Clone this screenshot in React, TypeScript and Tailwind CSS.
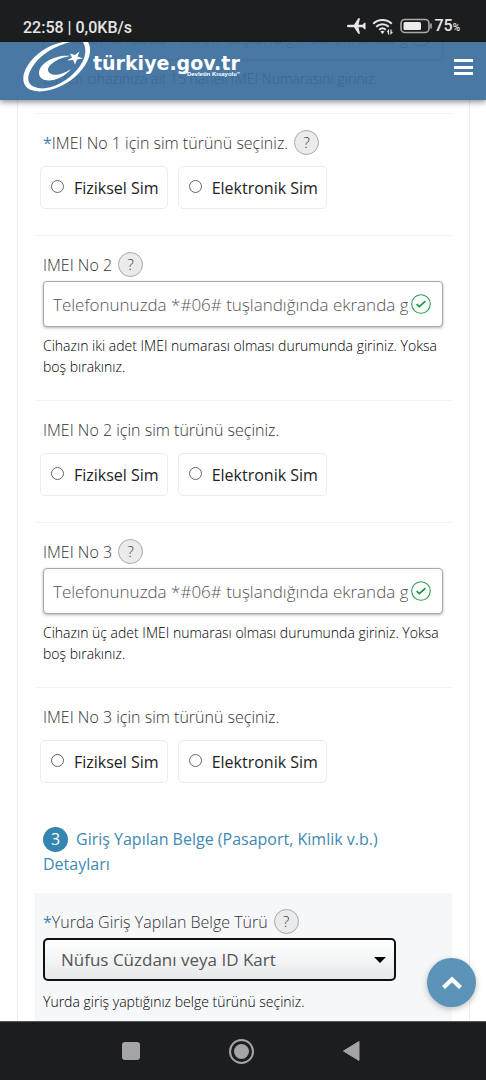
import type { ReactNode } from "react";

function HelpButton() {
  return (
    <button
      type="button"
      aria-label="Yardım"
      className="flex size-[25px] shrink-0 items-center justify-center rounded-full border border-[#a9a9a9] bg-[#ebebeb] text-[15px] font-light text-[#333]"
    >
      ?
    </button>
  );
}

function ValidIcon() {
  return (
    <svg viewBox="0 0 20 20" className="pointer-events-none absolute right-3 size-5" fill="none" aria-hidden="true">
      <circle cx="10" cy="10" r="9.3" stroke="#2f9e52" strokeWidth="1.1" />
      <path d="M5.6 10.2l2.8 2.5 6-5.6" stroke="#16993c" strokeWidth="1.7" />
    </svg>
  );
}

function Row({ children }: { children: ReactNode }) {
  return <div className="border-t border-[#f4f4f4] pt-4 pr-[9px] pl-2">{children}</div>;
}

type FieldProps = { id: string; label: string; hint: string };

function TextBox({ id, label }: { id: string; label?: string }) {
  return (
    <div className="relative flex items-center">
      <input
        id={id}
        type="text"
        aria-label={label}
        placeholder="Telefonunuzda *#06# tuşlandığında ekranda görünen numara"
        className="h-[46px] w-full rounded border border-[#aaa] bg-white pr-[34px] pl-[9px] text-[17px] font-light text-[#444] shadow-[0_1px_3px_rgba(0,0,0,0.3)] placeholder:text-[#555]"
      />
      <ValidIcon />
    </div>
  );
}

function ImeiField({ id, label, hint }: FieldProps) {
  return (
    <Row>
      <div className="mb-1 flex h-[25px] items-center gap-[6px]">
        <label htmlFor={id} className="text-[16px] font-light">
          {label}
        </label>
        <HelpButton />
      </div>
      <TextBox id={id} />
      <p className="mt-2 pb-[23px] text-[14px] leading-[21px] font-light text-black">{hint}</p>
    </Row>
  );
}

function SimOption({ name, label }: { name: string; label: string }) {
  return (
    <label className="flex h-[43px] items-center gap-[10px] rounded-[5px] border border-[#ececec] px-2 pl-[10px] text-[16px] text-[#222]">
      <input
        type="radio"
        name={name}
        className="-mt-[2px] size-[13px] appearance-none rounded-full border border-[#666] bg-white checked:border-4"
      />
      {label}
    </label>
  );
}

function SimChoice({ no, required }: { no: number; required?: boolean }) {
  const name = `sim-${no}`;
  return (
    <Row>
      <fieldset className="pb-[26px]">
        <legend className="mb-[11px] flex h-[25px] items-center gap-[6px] text-[16px] font-light">
          <span>
            {required && <span className="font-normal text-[#3783ae]">*</span>}
            IMEI No {no} için sim türünü seçiniz.
          </span>
          {required && <HelpButton />}
        </legend>
        <div className="-ml-[3px] flex gap-[10px]">
          <SimOption name={name} label="Fiziksel Sim" />
          <SimOption name={name} label="Elektronik Sim" />
        </div>
      </fieldset>
    </Row>
  );
}

function StatusBar() {
  return (
    <div className="flex h-[42px] items-end justify-between bg-[#1c1d1f] pr-[26px] pb-1 pl-[23px] font-[Roboto,sans-serif] text-[16px] leading-5 font-medium text-[#e6e6e6]">
      <span>22:58 | 0,0KB/s</span>
      <div className="flex items-center">
        <svg viewBox="0 0 19 18" className="mr-[6px] h-[18px] w-[19px]" fill="currentColor" aria-hidden="true">
          <path d="M0 9C0 8.200.8 7.800 1.800 7.800H7L11.300 1.200H13L11.500 7.800H15.500L17.300 5.800H18.500V12.200H17.300L15.500 10.200H11.500L13 16.800H11.300L7 10.200H1.800C.8 10.200 0 9.800 0 9Z" />
        </svg>
        <svg viewBox="0 0 22 18" className="mr-[6px] h-[18px] w-[22px]" fill="none" stroke="currentColor" strokeWidth="2" aria-hidden="true">
          <path d="M1.200 6.800a13.500 13.500 0 0 1 18.600 0M4.200 9.800a9.300 9.300 0 0 1 12.600 0M7.200 12.700a5 5 0 0 1 6.600 0" />
          <path d="M8.400 14.500a3.400 3.400 0 0 1 4.200 0L10.500 17z" fill="currentColor" stroke="none" />
          <path d="M16.500 17.500v-4l-1.300 1.600M19 12.500v4l1.400-1.600" strokeWidth="1.200" />
        </svg>
        <svg viewBox="0 0 32 16" className="mr-[2px] h-4 w-8" aria-hidden="true">
          <rect x="1" y="1.500" width="28" height="13" rx="4" fill="none" stroke="#aaa" strokeWidth="1.600" />
          <rect x="3.500" y="4" width="17.500" height="8" rx="1.500" fill="#ececec" />
          <path d="M31 5.500v5" stroke="#aaa" strokeWidth="1.600" />
        </svg>
        <span>75</span>
        <span className="pt-1 text-[10px]">%</span>
      </div>
    </div>
  );
}

function SiteHeader() {
  return (
    <header className="flex h-[58px] justify-between bg-[#3a6e9c]/93 pr-[13px] pl-[22px] shadow-[0_2px_6px_rgba(0,0,0,0.45)]">
      <a href="#" className="flex text-white">
        <svg viewBox="0 0 70 50" className="h-[50px] w-[70px]" fill="currentColor" aria-hidden="true">
          <path
            fillRule="evenodd"
            d="M66 0C71 9 67 22 54 34C42 45 25 51 13 49C0 47-2 35 6 23C13 12 26 3 41 0H48C33 4 19 12 11 24C4 34 4 44 16 46C27 48 41 42 52 31C63 20 66 9 61 0Z"
          />
          <path d="M49 14C34 12 17 21 17 31C17 42 38 41 49 27C39 34 27 35 26 28C26 22 38 15 49 14Z" />
          <path d="M57.500 9.500L55.500 14.500L61 16.500L55 17.500L53 22.500L51 18L45 18.500L50 15.500L48 11.500L53 13Z" />
        </svg>
        <span className="mt-[11px] ml-[1px] flex flex-col items-end font-['DejaVu_Sans',sans-serif] font-bold">
          <span className="text-[19px] leading-5">türkiye.gov.tr</span>
          <span className="-mt-[2px] font-['Liberation_Sans',sans-serif] text-[6px] leading-[6px]">"Devletin Kısayolu"</span>
        </span>
      </a>
      <button type="button" aria-label="Menü" className="mt-[17px] flex h-4 w-[19px] flex-col justify-between">
        <span className="h-[3px] w-full bg-white" />
        <span className="h-[3px] w-full bg-white" />
        <span className="h-[3px] w-full bg-white" />
      </button>
    </header>
  );
}

function SystemNav() {
  return (
    <nav className="grid h-[59px] shrink-0 grid-cols-[repeat(3,110px)] place-items-center justify-center border-t border-[#55585c] bg-[#1c1d1f] pr-1">
      <button type="button" aria-label="Son uygulamalar" className="size-[18px] rounded-[3px] bg-[#a5a5a7]" />
      <button
        type="button"
        aria-label="Ana ekran"
        className="flex size-[25px] items-center justify-center rounded-full border-2 border-[#a5a5a7]"
      >
        <span className="size-[15px] rounded-full bg-[#a5a5a7]" />
      </button>
      <button type="button" aria-label="Geri">
        <svg viewBox="0 0 18 22" className="h-[22px] w-[18px]" fill="#a5a5a7" aria-hidden="true">
          <path d="M17 1.500v19L1.500 11z" stroke="#a5a5a7" strokeLinejoin="round" />
        </svg>
      </button>
    </nav>
  );
}

export default function App() {
  return (
    <div className="relative flex h-screen flex-col bg-white font-['Open_Sans',sans-serif] text-[#333]">
      <div className="absolute inset-x-0 top-0 z-10">
        <StatusBar />
        <SiteHeader />
      </div>

      <main className="min-h-0 flex-1 overflow-hidden pr-4 pl-[17px]">
        <form className="border-x border-[#ececec] px-[17px]">
          <div className="pt-[14px] pr-[9px] pl-2">
            <TextBox id="imei-1" label="IMEI No 1" />
            <p className="mt-2 pb-6 text-[14px] leading-[21px] font-light text-black">
              Lütfen cihazınıza ait 15 haneli IMEI Numarasını giriniz.
            </p>
          </div>
          <SimChoice no={1} required />
          <ImeiField
            id="imei-2"
            label="IMEI No 2"
            hint="Cihazın iki adet IMEI numarası olması durumunda giriniz. Yoksa boş bırakınız."
          />
          <SimChoice no={2} />
          <ImeiField
            id="imei-3"
            label="IMEI No 3"
            hint="Cihazın üç adet IMEI numarası olması durumunda giriniz. Yoksa boş bırakınız."
          />
          <SimChoice no={3} />

          <h2 className="mt-[18px] mb-4 px-2 text-[16px] leading-[25px] text-[#3f89b3]">
            <span className="float-left mr-2 flex size-[25px] items-center justify-center rounded-full bg-[#3585b3] text-white">
              3
            </span>
            Giriş Yapılan Belge (Pasaport, Kimlik v.b.) Detayları
          </h2>

          <div className="bg-[#f6f7f9] pt-4 pr-[9px] pb-8 pl-2">
            <div className="mb-1 flex h-[25px] items-center gap-[6px]">
              <label htmlFor="document" className="text-[16px] font-light">
                <span className="font-normal text-[#3783ae]">*</span>
                Yurda Giriş Yapılan Belge Türü
              </label>
              <HelpButton />
            </div>
            <div className="relative mr-[47px] flex items-center">
              <select
                id="document"
                className="h-[43px] w-full appearance-none rounded-[5px] border-2 border-[#111] bg-linear-to-b from-white to-[#e6e9eb] pl-4 text-[17px] text-[#555]"
              >
                <option>Nüfus Cüzdanı veya ID Kart</option>
              </select>
              <svg viewBox="0 0 12 6" className="pointer-events-none absolute right-[10px] h-[6px] w-3" aria-hidden="true">
                <path d="M0 0h12L6 6z" />
              </svg>
            </div>
            <p className="mt-[10px] text-[14px] leading-[21px] font-light text-black">
              Yurda giriş yaptığınız belge türünü seçiniz.
            </p>
          </div>
        </form>
      </main>

      <button
        type="button"
        aria-label="Yukarı çık"
        className="absolute right-[10px] bottom-[73px] flex size-[49px] items-center justify-center rounded-full bg-[#5b94b6] shadow-[0_2px_6px_rgba(0,0,0,0.25)]"
      >
        <svg viewBox="0 0 20 14" className="h-[14px] w-5" fill="none" stroke="white" strokeWidth="4.200" aria-hidden="true">
          <path d="M1.500 11.500L10 3.500l8.500 8" />
        </svg>
      </button>

      <SystemNav />
    </div>
  );
}
